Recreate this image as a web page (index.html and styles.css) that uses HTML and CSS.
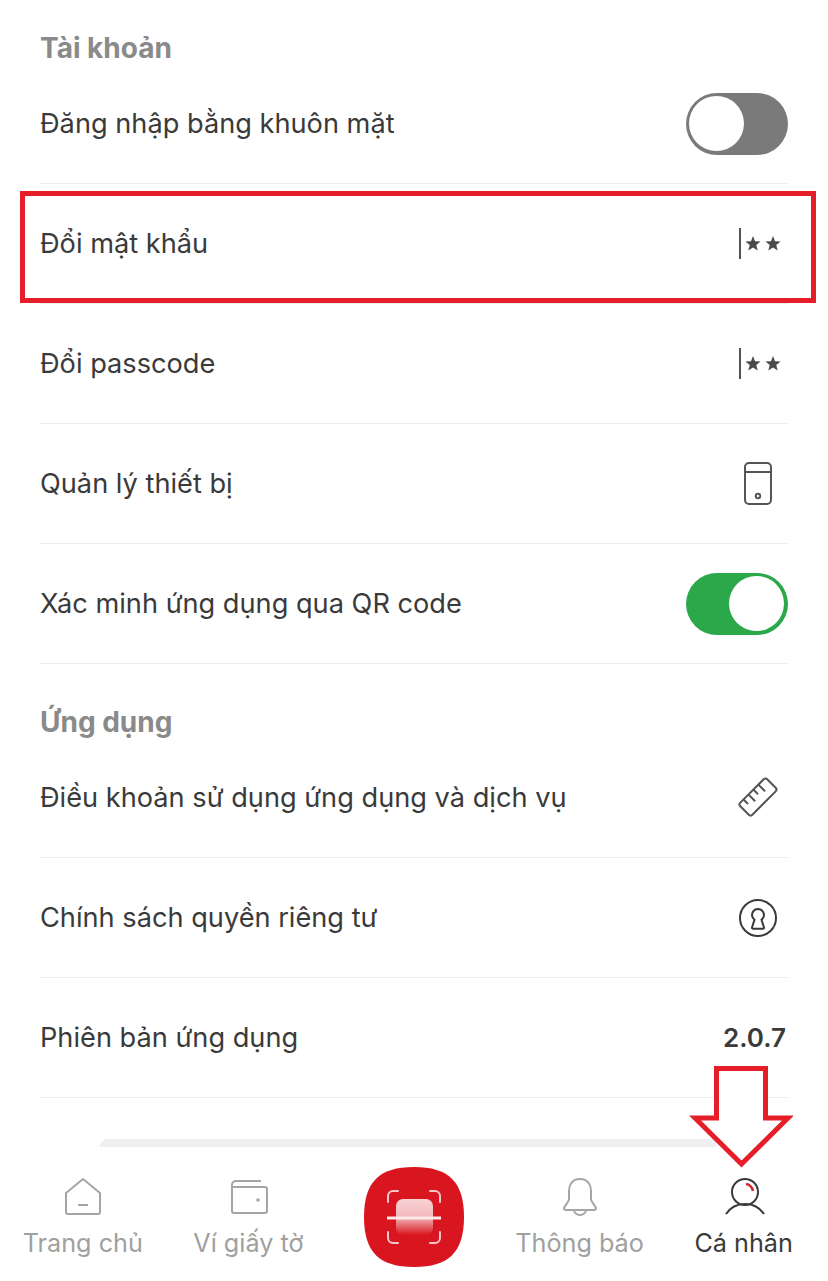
FILE: index.html
```html
<!DOCTYPE html>
<html lang="vi">
<head>
  <meta charset="UTF-8" />
  <meta name="viewport" content="width=device-width, initial-scale=1.0" />
  <title>Cá nhân</title>
  <link rel="stylesheet" href="styles.css">
</head>
<body>
  <main class="noi-dung">
    <h4 class="tieu-de tieu-de-dau">Tài khoản</h4>
    <div class="dong">
      <span>Đăng nhập bằng khuôn mặt</span>
      <div class="cong-tac"><div class="nut"></div></div>
    </div>
    <div class="dong">
      <span>Đổi mật khẩu</span>
      <svg class="icon" viewBox="0 0 60 60"><use href="#mat-khau" /></svg>
    </div>
    <div class="dong">
      <span>Đổi passcode</span>
      <svg class="icon" viewBox="0 0 60 60"><use href="#mat-khau" /></svg>
    </div>
    <div class="dong">
      <span>Quản lý thiết bị</span>
      <svg class="icon" viewBox="0 0 60 60" fill="none" stroke="#555" stroke-width="2">
        <rect x="17" y="9" width="26" height="41" rx="4" />
        <path d="M17 18H43" />
        <circle cx="30" cy="42" r="2.2" />
      </svg>
    </div>
    <div class="dong">
      <span>Xác minh ứng dụng qua QR code</span>
      <div class="cong-tac bat"><div class="nut"></div></div>
    </div>

    <h4 class="tieu-de">Ứng dụng</h4>
    <div class="dong">
      <span>Điều khoản sử dụng ứng dụng và dịch vụ</span>
      <svg class="icon" viewBox="0 0 60 60" fill="none" stroke="#555" stroke-width="2">
        <g transform="rotate(-45 30 29)">
          <rect x="11" y="20.5" width="38" height="17" rx="2.5" />
          <path d="M18 20.5V27M25 20.5V30M32 20.5V27M39 20.5V30" />
        </g>
      </svg>
    </div>
    <div class="dong">
      <span>Chính sách quyền riêng tư</span>
      <svg class="icon" viewBox="0 0 60 60" fill="none" stroke="#3a3a3a" stroke-width="2">
        <circle cx="30" cy="30" r="18" />
        <path d="M30 21a6 6 0 0 1 3.5 10.8L36 39.5a1 1 0 0 1-1 1.2H25a1 1 0 0 1-1-1.2l2.5-7.7A6 6 0 0 1 30 21Z" />
      </svg>
    </div>
    <div class="dong">
      <span>Phiên bản ứng dụng</span>
      <strong class="phien-ban">2.0.7</strong>
    </div>
    <div class="thanh-xam"></div>
  </main>

  <nav class="menu">
    <div class="muc">
      <svg class="icon-menu" viewBox="0 0 40 40" fill="none" stroke="#a5a5a5" stroke-width="2">
        <path d="M20 2 37 16V35a2 2 0 0 1-2 2H5a2 2 0 0 1-2-2V16Z" stroke-linejoin="round" />
        <path d="M15 28H25" />
      </svg>
      <span>Trang chủ</span>
    </div>
    <div class="muc">
      <svg class="icon-menu" viewBox="0 0 40 40" fill="none" stroke="#a5a5a5" stroke-width="2">
        <path d="M33 4H8a4 4 0 0 0-4 4V34a2 2 0 0 0 2 2H37a2 2 0 0 0 2-2V12a2 2 0 0 0-2-2H4" />
        <circle cx="30" cy="23" r="1.8" fill="#a5a5a5" stroke="none" />
      </svg>
      <span>Ví giấy tờ</span>
    </div>
    <div class="muc">
      <div class="nut-quet">
        <svg viewBox="0 0 100 100" width="100" height="100" fill="none">
          <defs>
            <linearGradient id="anh-sang" x1="0" y1="0" x2="0" y2="1">
              <stop offset="0" stop-color="#f6d2d4" />
              <stop offset="0.5" stop-color="#f4b9bd" />
              <stop offset="1" stop-color="#d9161f" />
            </linearGradient>
          </defs>
          <path d="M50 0C85 0 100 15 100 50S85 100 50 100 0 85 0 50 15 0 50 0Z" fill="#d9161f" />
          <rect x="32" y="32" width="37" height="36" rx="7" fill="url(#anh-sang)" />
          <path d="M34 24H29a5 5 0 0 0-5 5V35M66 24H71a5 5 0 0 1 5 5V35M34 76H29a5 5 0 0 1-5-5V65M66 76H71a5 5 0 0 0 5-5V65" stroke="#f6c6ca" stroke-width="2" stroke-linecap="round" />
          <path d="M23 51H77" stroke="#fbe9ea" stroke-width="3" />
        </svg>
      </div>
    </div>
    <div class="muc">
      <svg class="icon-menu" viewBox="0 0 40 40" fill="none" stroke="#a5a5a5" stroke-width="2">
        <path d="M20 2C12 2 9 8 9 14V22C9 25 6 27 4 31Q4 33 6 33H34Q36 33 36 31C34 27 31 25 31 22V14C31 8 28 2 20 2Z" />
        <path d="M14 33a6 5 0 0 0 12 0" />
      </svg>
      <span>Thông báo</span>
    </div>
    <div class="muc dang-chon">
      <svg class="icon-menu" viewBox="0 0 40 40" fill="none" stroke="#3a3a3a" stroke-width="2">
        <circle cx="20" cy="15" r="13" />
        <path d="M1 37C5 31 11 27 20 27S35 31 39 37" />
        <path d="M21 7C25 7.5 27 10 28 14" stroke="#d9232e" stroke-width="2.5" />
      </svg>
      <span>Cá nhân</span>
    </div>
  </nav>

  <div class="khung-do"></div>
  <svg class="mui-ten" viewBox="0 0 104 104" fill="#fff" stroke="#e61e2a" stroke-width="5">
    <path d="M27.5 3.5H76.5V53H99L52.5 99 6 53H27.5Z" />
  </svg>

  <svg class="an" width="0" height="0">
    <symbol id="mat-khau" viewBox="0 0 60 60">
      <path d="M12 14V45" stroke="#555" stroke-width="2" />
      <polygon fill="#4a4a4a" transform="translate(25 30)" points="0,-8 2,-2.75 7.6,-2.47 3.23,1.05 4.7,6.47 0,3.4 -4.7,6.47 -3.23,1.05 -7.6,-2.47 -2,-2.75" />
      <polygon fill="#4a4a4a" transform="translate(45 30)" points="0,-8 2,-2.75 7.6,-2.47 3.23,1.05 4.7,6.47 0,3.4 -4.7,6.47 -3.23,1.05 -7.6,-2.47 -2,-2.75" />
    </symbol>
  </svg>
</body>
</html>
```

FILE: styles.css
```css
body {
  font-family: 'Inter', 'Noto Sans', sans-serif;
  background-color: #ffffff;
  color: #3a3a3a;
  margin: 0;
  width: 828px;
  height: 1281px;
  display: flex;
  flex-direction: column;
  overflow: hidden;
  position: relative;
}

.noi-dung {
  flex: 1;
  padding: 32px 40px 0;
}

.tieu-de {
  margin: 42px 0 0;
  height: 32px;
  line-height: 32px;
  font-size: 28px;
  font-weight: 700;
  color: #8a8a8a;
}

.tieu-de-dau {
  margin-top: 0;
}

.dong {
  display: flex;
  justify-content: space-between;
  align-items: center;
  height: 120px;
  box-sizing: border-box;
  border-bottom: 1px solid #ececec;
  font-size: 27.2px;
}

.icon {
  width: 60px;
  height: 60px;
}

.phien-ban {
  font-weight: 600;
  font-size: 26px;
  margin-right: 2px;
}

.cong-tac {
  width: 102px;
  height: 62px;
  border-radius: 31px;
  background-color: #7a7a7a;
  padding: 3px;
  box-sizing: border-box;
  display: flex;
}

.cong-tac.bat {
  background-color: #2aa84a;
  justify-content: flex-end;
  padding-right: 4px;
}

.nut {
  width: 55px;
  height: 55px;
  border-radius: 50%;
  background-color: #ffffff;
  margin-top: 0.5px;
}

.thanh-xam {
  margin: 41px 72px 0 60px;
  height: 8px;
  background-color: #efefef;
  border-radius: 10px 0 0 0;
}

.menu {
  display: flex;
  height: 134px;
  background-color: #ffffff;
}

.muc {
  flex: 1;
  display: flex;
  flex-direction: column;
  align-items: center;
  padding-top: 30px;
  font-size: 25.2px;
  line-height: 32px;
  color: #a0a0a0;
}

.dang-chon {
  color: #3a3a3a;
}

.dang-chon span {
  margin-right: 3px;
}

.icon-menu {
  width: 40px;
  height: 40px;
  margin-bottom: 10px;
}

.nut-quet {
  width: 100px;
  height: 100px;
  margin-top: -10px;
}

.khung-do {
  position: absolute;
  left: 20px;
  top: 191px;
  width: 796px;
  height: 112px;
  border: 5px solid #e61e2a;
  box-sizing: border-box;
}

.mui-ten {
  position: absolute;
  left: 689px;
  top: 1065px;
  width: 104px;
  height: 104px;
}

.an {
  position: absolute;
}
```
